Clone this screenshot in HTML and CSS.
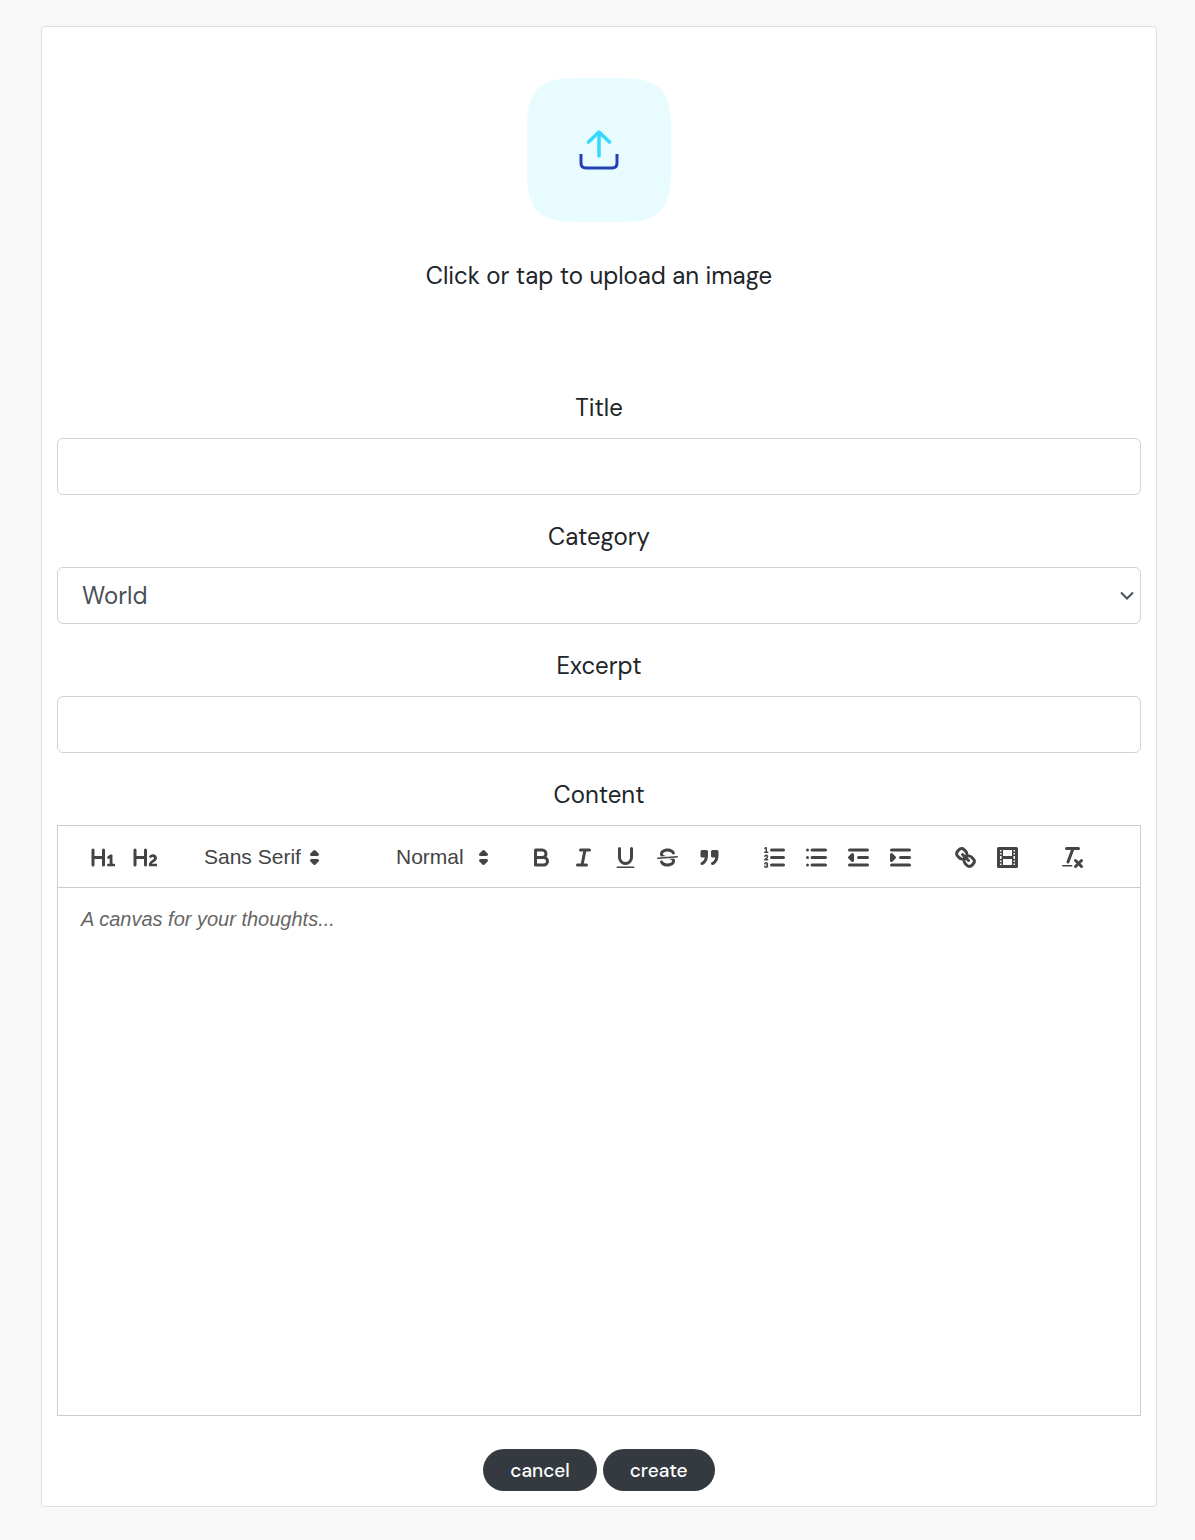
FILE: index.html
```html
<!DOCTYPE html>
<html lang="en">
<head>
<meta charset="utf-8">
<meta name="viewport" content="width=device-width, initial-scale=1">
<title>Create post</title>
<link rel="stylesheet" href="styles.css">
</head>
<body>
<main class="page">
  <form class="card">
    <label class="upload">
      <input class="upload-input" type="file" accept="image/*">
      <svg class="upload-art" viewBox="0 0 144 144" aria-hidden="true">
        <path fill="#e8fcff" d="M0 50C0 12 12 0 50 0H94C132 0 144 12 144 50V94C144 132 132 144 94 144H50C12 144 0 132 0 94Z"/>
        <g fill="none" stroke-width="3" stroke-linecap="round" stroke-linejoin="round">
          <path stroke="#35d8ff" stroke-width="3.500" d="M72 78V54M61.500 64L72 54L82.500 64"/>
          <path stroke="#2440b4" stroke-linecap="butt" d="M54 76V85Q54 90 59 90H85Q90 90 90 85V76"/>
        </g>
      </svg>
      <span class="upload-text">Click or tap to upload an image</span>
    </label>

    <div class="field">
      <label class="label" for="title">Title</label>
      <input class="control" id="title" type="text">
    </div>
    <div class="field">
      <label class="label" for="category">Category</label>
      <div class="select-wrap">
        <select class="control" id="category"><option>World</option></select>
        <svg class="chevron" viewBox="0 0 14 9" aria-hidden="true"><path d="M1 1.500L7 7.500L13 1.500"/></svg>
      </div>
    </div>
    <div class="field">
      <label class="label" for="excerpt">Excerpt</label>
      <input class="control" id="excerpt" type="text">
    </div>
    <div class="field">
      <label class="label" for="content">Content</label>
      <div class="editor">
        <div class="toolbar" role="toolbar" aria-label="Formatting">
          <div class="group">
            <button class="tool" type="button" aria-label="Heading 1"><svg viewBox="0 0 18 18"><path class="fill" d="M10,4V14a1,1,0,0,1-2,0V10H3v4a1,1,0,0,1-2,0V4A1,1,0,0,1,3,4V8H8V4a1,1,0,0,1,2,0Zm6.06787,9.209H14.98975V7.59863a.54085.54085,0,0,0-.605-.60547h-.62744a1.01119,1.01119,0,0,0-.748.29688L11.645,8.56641a.5435.5435,0,0,0-.022.8584l.28613.30762a.53861.53861,0,0,0,.84717.0332l.09912-.08789a1.2137,1.2137,0,0,0,.2417-.35254h.02246s-.01123.30859-.01123.60547V13.209H12.041a.54085.54085,0,0,0-.605.60547v.43945a.54085.54085,0,0,0,.605.60547h4.02686a.54085.54085,0,0,0,.605-.60547v-.43945A.54085.54085,0,0,0,16.06787,13.209Z"/></svg></button>
            <button class="tool" type="button" aria-label="Heading 2"><svg viewBox="0 0 18 18"><path class="fill" d="M16.73975,13.81445v.43945a.54085.54085,0,0,1-.605.60547H11.855a.58392.58392,0,0,1-.64893-.60547V14.0127c0-2.90527,3.39941-3.42187,3.39941-4.55469a.77675.77675,0,0,0-.84717-.78125,1.17684,1.17684,0,0,0-.83594.38477c-.2749.26367-.561.374-.85791.13184l-.4292-.34082c-.30811-.24219-.38525-.51758-.1543-.81445a2.97155,2.97155,0,0,1,2.45361-1.17676,2.45393,2.45393,0,0,1,2.68408,2.40918c0,2.45312-3.1792,2.92676-3.27832,3.93848h2.79443A.54085.54085,0,0,1,16.73975,13.81445ZM9,3A.99974.99974,0,0,0,8,4V8H3V4A1,1,0,0,0,1,4V14a1,1,0,0,0,2,0V10H8v4a1,1,0,0,0,2,0V4A.99974.99974,0,0,0,9,3Z"/></svg></button>
          </div>
          <div class="picker picker-font">
            <select aria-label="Font"><option>Sans Serif</option></select>
            <svg viewBox="0 0 18 18" aria-hidden="true"><path class="solid" d="M7 11L9 13L11 11ZM7 7L9 5L11 7Z"/></svg>
          </div>
          <div class="picker picker-size">
            <select aria-label="Size"><option>Normal</option></select>
            <svg viewBox="0 0 18 18" aria-hidden="true"><path class="solid" d="M7 11L9 13L11 11ZM7 7L9 5L11 7Z"/></svg>
          </div>
          <div class="group">
            <button class="tool" type="button" aria-label="Bold"><svg viewBox="0 0 18 18"><path d="M5,4H9.500A2.500,2.500,0,0,1,9.500,9H5ZM5,9H10.500A2.500,2.500,0,0,1,10.500,14H5Z"/></svg></button>
            <button class="tool" type="button" aria-label="Italic"><svg viewBox="0 0 18 18"><path d="M7 4H13M5 14H11M8 14L10 4"/></svg></button>
            <button class="tool" type="button" aria-label="Underline"><svg viewBox="0 0 18 18"><path d="M5,3V9a4,4,0,0,0,8,0V3"/><rect class="fill" x="3" y="15" width="12" height="1" rx=".5"/></svg></button>
            <button class="tool" type="button" aria-label="Strikethrough"><svg viewBox="0 0 18 18"><path class="thin" d="M15.500 8.500L2.500 9.500"/><path class="fill" d="M9.007,8C6.542,7.791,6,7.519,6,6.5,6,5.792,7.283,5,9,5c1.571,0,2.765.679,2.969,1.309a1,1,0,0,0,1.9-.617C13.356,4.106,11.354,3,9,3,6.2,3,4,4.538,4,6.5a3.2,3.2,0,0,0,.5,1.843Z"/><path class="fill" d="M8.984,10C11.457,10.208,12,10.479,12,11.5c0,0.708-1.283,1.5-3,1.5-1.571,0-2.765-.679-2.969-1.309a1,1,0,1,0-1.9.617C4.644,13.894,6.646,15,9,15c2.8,0,5-1.538,5-3.5a3.2,3.2,0,0,0-.5-1.843Z"/></svg></button>
            <button class="tool" type="button" aria-label="Quote"><svg viewBox="0 0 18 18"><path class="solid" d="M4 5H7V8H4ZM11 5H14V8H11ZM7,8c0,4.031-3,5-3,5M14,8c0,4.031-3,5-3,5"/></svg></button>
          </div>
          <div class="group">
            <button class="tool" type="button" aria-label="Numbered list"><svg viewBox="0 0 18 18"><path d="M7 4H15M7 9H15M7 14H15"/><path class="thin" d="M2.500 5.500H4.500M4.5,10.5h-2c0-.234,1.85-1.076,1.85-2.234A0.959,0.959,0,0,0,2.5,8.156M2.5,14.846a0.959,0.959,0,0,0,1.85-.109A0.7,0.7,0,0,0,3.75,14a0.688,0.688,0,0,0,.6-0.736,0.959,0.959,0,0,0-1.85-.109"/><path class="fill" d="M3.5,6A0.5,0.5,0,0,1,3,5.5V3.085l-0.276.138A0.5,0.5,0,0,1,2.053,3c-0.124-.247-0.023-0.324.224-0.447l1-.5A0.5,0.5,0,0,1,4,2.5v3A0.5,0.5,0,0,1,3.5,6Z"/></svg></button>
            <button class="tool" type="button" aria-label="Bulleted list"><svg viewBox="0 0 18 18"><path d="M6 4H15M6 9H15M6 14H15M3 4H3M3 9H3M3 14H3"/></svg></button>
            <button class="tool" type="button" aria-label="Decrease indent"><svg viewBox="0 0 18 18"><path d="M3 4H15M9 9H15M3 14H15"/><path class="solid" d="M5 7V11L3 9Z"/></svg></button>
            <button class="tool" type="button" aria-label="Increase indent"><svg viewBox="0 0 18 18"><path d="M3 4H15M9 9H15M3 14H15"/><path class="solid" d="M3 7V11L5 9Z"/></svg></button>
          </div>
          <div class="group">
            <button class="tool" type="button" aria-label="Link"><svg viewBox="0 0 18 18"><path d="M7 7L11 11M8.9,4.577a3.476,3.476,0,0,1,.36,4.679A3.476,3.476,0,0,1,4.577,8.9C3.185,7.5,2.035,6.4,4.217,4.217S7.5,3.185,8.9,4.577ZM13.423,9.1a3.476,3.476,0,0,0-4.679-.36,3.476,3.476,0,0,0,.36,4.679c1.392,1.392,2.5,2.542,4.679.36S14.815,10.5,13.423,9.1Z"/></svg></button>
            <button class="tool" type="button" aria-label="Video"><svg viewBox="0 0 18 18"><path d="M3 3H15V15H3Z"/><path class="fill" d="M5 3h1v12H5ZM12 3h1v12h-1ZM5 8h8v2H5ZM3 5h3v1H3ZM3 7h3v1H3ZM3 10h3v1H3ZM3 12h3v1H3ZM12 5h3v1h-3ZM12 7h3v1h-3ZM12 10h3v1h-3ZM12 12h3v1h-3Z"/></svg></button>
          </div>
          <div class="group">
            <button class="tool" type="button" aria-label="Clear formatting"><svg viewBox="0 0 18 18"><path d="M5 3H13M6 12L9.350 3M11 11L15 15M15 11L11 15"/><rect class="fill" x="2" y="14" width="7" height="1" rx=".5"/></svg></button>
          </div>
        </div>
        <textarea class="canvas" id="content" placeholder="A canvas for your thoughts..."></textarea>
      </div>
    </div>
    <div class="actions">
      <button class="btn" type="button">cancel</button>
      <button class="btn" type="submit">create</button>
    </div>
  </form>
</main>
</body>
</html>
```
FILE: styles.css
```css
* { box-sizing: border-box; }

body {
  margin: 0;
  background: #f8f8f8;
  color: #212529;
  font: 24px/36px "DM Sans", Inter, sans-serif;
  font-optical-sizing: none;
}

.page { padding: 26px 38px 33px 41px; }

.card {
  display: flex;
  flex-direction: column;
  padding: 51px 15px 15px;
  background: #fff;
  border: 1px solid #dfdfdf;
  border-radius: 4px;
}

.upload {
  display: flex;
  flex-direction: column;
  align-items: center;
  gap: 36px;
  align-self: center;
  margin-bottom: 96px;
  cursor: pointer;
}
.upload-input {
  position: absolute;
  width: 1px;
  height: 1px;
  opacity: 0;
}
.upload-art { width: 144px; height: 144px; }

.field {
  display: flex;
  flex-direction: column;
  gap: 12px;
  margin-bottom: 24px;
}
.label { text-align: center; }

.control {
  width: 100%;
  height: 57px;
  padding: 0 24px;
  border: 1px solid #ced4da;
  border-radius: 6px;
  background: #fff;
  color: #495057;
  font: inherit;
  font-optical-sizing: none;
  appearance: none;
}

.select-wrap, .picker { display: grid; align-items: center; }
.select-wrap > *, .picker > * { grid-area: 1 / 1; }
.chevron {
  width: 14px;
  height: 9px;
  margin-right: 7px;
  justify-self: end;
  fill: none;
  stroke: #495057;
  stroke-width: 2;
  pointer-events: none;
}

.editor {
  border: 1px solid #ccc;
  color: #444;
  font-family: "Liberation Sans", Arial, sans-serif;
}

.toolbar {
  display: flex;
  flex-wrap: wrap;
  align-items: center;
  column-gap: 23px;
  padding: 13px 24px 12px;
  border-bottom: 1px solid #ccc;
}
.group { display: flex; }
.tool {
  display: flex;
  justify-content: center;
  align-items: center;
  width: 42px;
  height: 36px;
  padding: 0;
  border: 0;
  background: none;
}
.toolbar svg {
  width: 27px;
  height: 27px;
  fill: none;
  stroke: #444;
  stroke-width: 2;
  stroke-linecap: round;
  stroke-linejoin: round;
}
.toolbar .fill { fill: #444; stroke: none; }
.toolbar .solid { fill: #444; }
.toolbar .thin { stroke-width: 1; }

.picker select {
  width: 100%;
  height: 36px;
  padding: 0 0 0 15px;
  border: 0;
  background: none;
  color: #444;
  font: 21px/36px "Liberation Sans", Arial, sans-serif;
  appearance: none;
}
.picker svg { justify-self: end; pointer-events: none; }
.picker-font { width: 139px; margin-right: 30px; }
.picker-size { width: 116px; }

.canvas {
  display: block;
  width: 100%;
  min-height: 527px;
  padding: 16px 23px;
  border: 0;
  background: none;
  color: #444;
  font: 20px/30px "Liberation Sans", Arial, sans-serif;
  resize: none;
}
.canvas::placeholder { color: #666; font-style: italic; }

.actions {
  display: flex;
  justify-content: center;
  gap: 6px;
  margin-top: 9px;
}
.btn {
  height: 42px;
  padding: 0 27px;
  border: 0;
  border-radius: 21px;
  background: #343a40;
  color: #fff;
  font: 500 19px/27px "DM Sans", Inter, sans-serif;
  font-optical-sizing: none;
}
```
